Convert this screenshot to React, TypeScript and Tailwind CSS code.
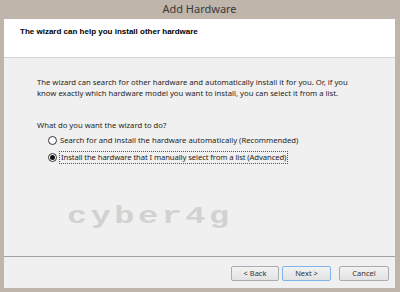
const ui = { fontFamily: '"Noto Sans", "Open Sans", sans-serif' };

function Radio({ checked }: { checked?: boolean }) {
  return (
    <span className="w-[9px] h-[9px] rounded-full border border-[#333] bg-white flex items-center justify-center shrink-0">
      {checked && <span className="w-[5px] h-[5px] rounded-full bg-[#111]" />}
    </span>
  );
}

function WizButton({ label, focused }: { label: string; focused?: boolean }) {
  return (
    <button
      className={
        'w-full h-[15px] flex items-center justify-center text-[7.5px] text-[#333] rounded-[2px] border bg-gradient-to-b from-[#f2f2f2] to-[#e3e3e3] ' +
        (focused ? 'border-[#7eb4ea]' : 'border-[#acacac]')
      }
      style={ui}
    >
      {label}
    </button>
  );
}

export default function App() {
  return (
    <div className="w-[400px] h-[292px] bg-[#bfb5aa] flex flex-col pl-[4px] pr-[5px] pb-[4px]" style={ui}>
      <div className="h-[19px] flex items-center justify-center text-[11px] text-[#3a3a3a]">Add Hardware</div>
      <div className="flex-1 flex flex-col bg-[#f0f0f0]">
        <div className="h-[39px] bg-white border-b border-[#d5d5d5] pl-[16px] pt-[7px]">
          <div className="text-[8px] font-bold text-black" style={{ fontFamily: '"Liberation Sans", Arial, sans-serif' }}>
            The wizard can help you install other hardware
          </div>
        </div>
        <div className="flex-1 flex flex-col pl-[33px] pt-[19px] text-[7.7px] leading-[11px] text-[#1e1e1e]">
          <p>
            The wizard can search for other hardware and automatically install it for you. Or, if you
            <br />
            know exactly which hardware model you want to install, you can select it from a list.
          </p>
          <p className="mt-[21px]">What do you want the wizard to do?</p>
          <div className="flex flex-col gap-[5px] mt-[4px] pl-[11px]">
            <label className="flex items-center gap-[2px]">
              <Radio />
              <span className="px-[1px]">Search for and install the hardware automatically (Recommended)</span>
            </label>
            <label className="flex items-center gap-[2px]">
              <Radio checked />
              <span className="px-[1px] border border-dotted border-[#555] tracking-[-0.1px]">
                Install the hardware that I manually select from a list (Advanced)
              </span>
            </label>
          </div>
          <div className="mt-[39px] ml-[30px] h-[28px]">
            <div
              className="inline-block origin-left scale-x-[1.4] text-[24px] leading-[28px] font-semibold text-[#d2d2d2] tracking-[2.5px]"
              style={{ fontFamily: '"Liberation Mono", "DejaVu Sans Mono", monospace' }}
            >
              cyber4g
            </div>
          </div>
        </div>
        <div className="h-[32px] border-t border-[#a0a0a0] flex items-start justify-end pr-[6px] pt-[9px]">
          <div className="flex items-center gap-[3px]">
            <div className="w-[48px]"><WizButton label="< Back" /></div>
            <div className="w-[49px]"><WizButton label="Next >" focused /></div>
          </div>
          <div className="w-[50px] ml-[8px]"><WizButton label="Cancel" /></div>
        </div>
      </div>
    </div>
  );
}
